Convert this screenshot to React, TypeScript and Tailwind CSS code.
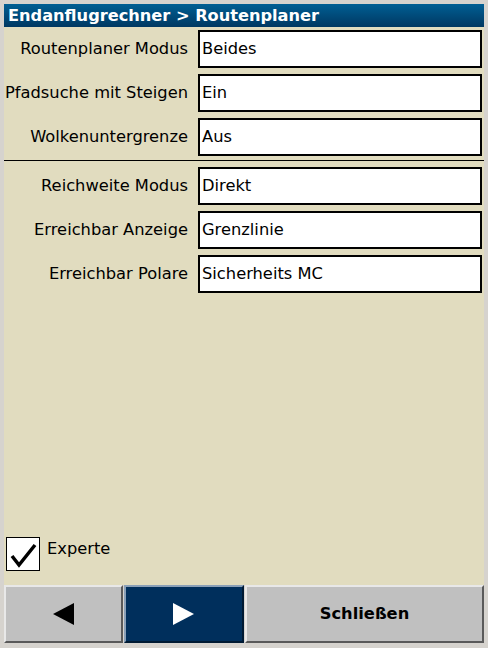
import React from 'react';

const rowsTop = [
  { label: 'Routenplaner Modus', value: 'Beides' },
  { label: 'Pfadsuche mit Steigen', value: 'Ein' },
  { label: 'Wolkenuntergrenze', value: 'Aus' },
];

const rowsBottom = [
  { label: 'Reichweite Modus', value: 'Direkt' },
  { label: 'Erreichbar Anzeige', value: 'Grenzlinie' },
  { label: 'Erreichbar Polare', value: 'Sicherheits MC' },
];

const Row: React.FC<{ label: string; value: string }> = ({ label, value }) => (
  <div className="flex items-center h-[38px]">
    <div className="w-[184px] text-right text-[16.3px] text-black whitespace-nowrap">{label}</div>
    <div className="ml-[10px] w-[284px] h-[38px] bg-white border-2 border-black flex items-center pl-[2px] text-[16.3px] text-black">
      {value}
    </div>
  </div>
);

export default function App() {
  return (
    <div
      className="w-[488px] h-[648px] bg-[#d6d3ce] flex flex-col pt-[4px] pb-[5px] px-[4px]"
      style={{ fontFamily: '"DejaVu Sans", sans-serif' }}
    >
      {/* Title bar */}
      <div className="h-[23px] bg-gradient-to-b from-[#005f94] to-[#003862] text-white font-bold text-[16.2px] leading-[23px] pl-[4px] whitespace-nowrap">
        Endanflugrechner &gt; Routenplaner
      </div>

      {/* Content */}
      <div className="flex-1 bg-[#e1dcbf] flex flex-col pt-[3px]">
        <div className="flex flex-col gap-[6px]">
          {rowsTop.map(r => <Row key={r.label} {...r} />)}
        </div>
        <div className="h-px bg-black mt-[4px] mb-[6px]" />
        <div className="flex flex-col gap-[6px]">
          {rowsBottom.map(r => <Row key={r.label} {...r} />)}
        </div>

        <div className="mt-auto mb-[14px] flex items-start pl-[2px]">
          <div className="w-[34px] h-[34px] bg-white border border-black flex items-center justify-center">
            <svg width="30" height="30" viewBox="0 0 30 30">
              <path d="M4 17 L11 26 L27 6" fill="none" stroke="black" strokeWidth="3.5" strokeLinejoin="miter" />
            </svg>
          </div>
          <span className="ml-[7px] text-[16.3px] text-black">Experte</span>
        </div>
      </div>

      {/* Buttons */}
      <div className="flex h-[58px]">
        <div className="w-[119px] bg-[#c0c0c0] border-t-2 border-l-2 border-[#e8e8e8] border-b-2 border-r-2 border-b-[#5a5a5a] border-r-[#5a5a5a] flex items-center justify-center">
          <svg width="22" height="22" viewBox="0 0 22 22">
            <polygon points="0,11 21,0 21,22" fill="black" />
          </svg>
        </div>
        <div className="ml-[1px] w-[120px] bg-[#002f5c] border-t-2 border-l-2 border-[#8aa0b8] border-b-2 border-r-2 border-b-[#001a33] border-r-[#001a33] flex items-center justify-center">
          <svg width="22" height="22" viewBox="0 0 22 22">
            <polygon points="0,0 21,11 0,22" fill="white" />
          </svg>
        </div>
        <div className="ml-[1px] flex-1 bg-[#c0c0c0] border-t-2 border-l-2 border-[#e8e8e8] border-b-2 border-r-2 border-b-[#5a5a5a] border-r-[#5a5a5a] flex items-center justify-center font-bold text-[16.3px] text-black">
          Schließen
        </div>
      </div>
    </div>
  );
}
